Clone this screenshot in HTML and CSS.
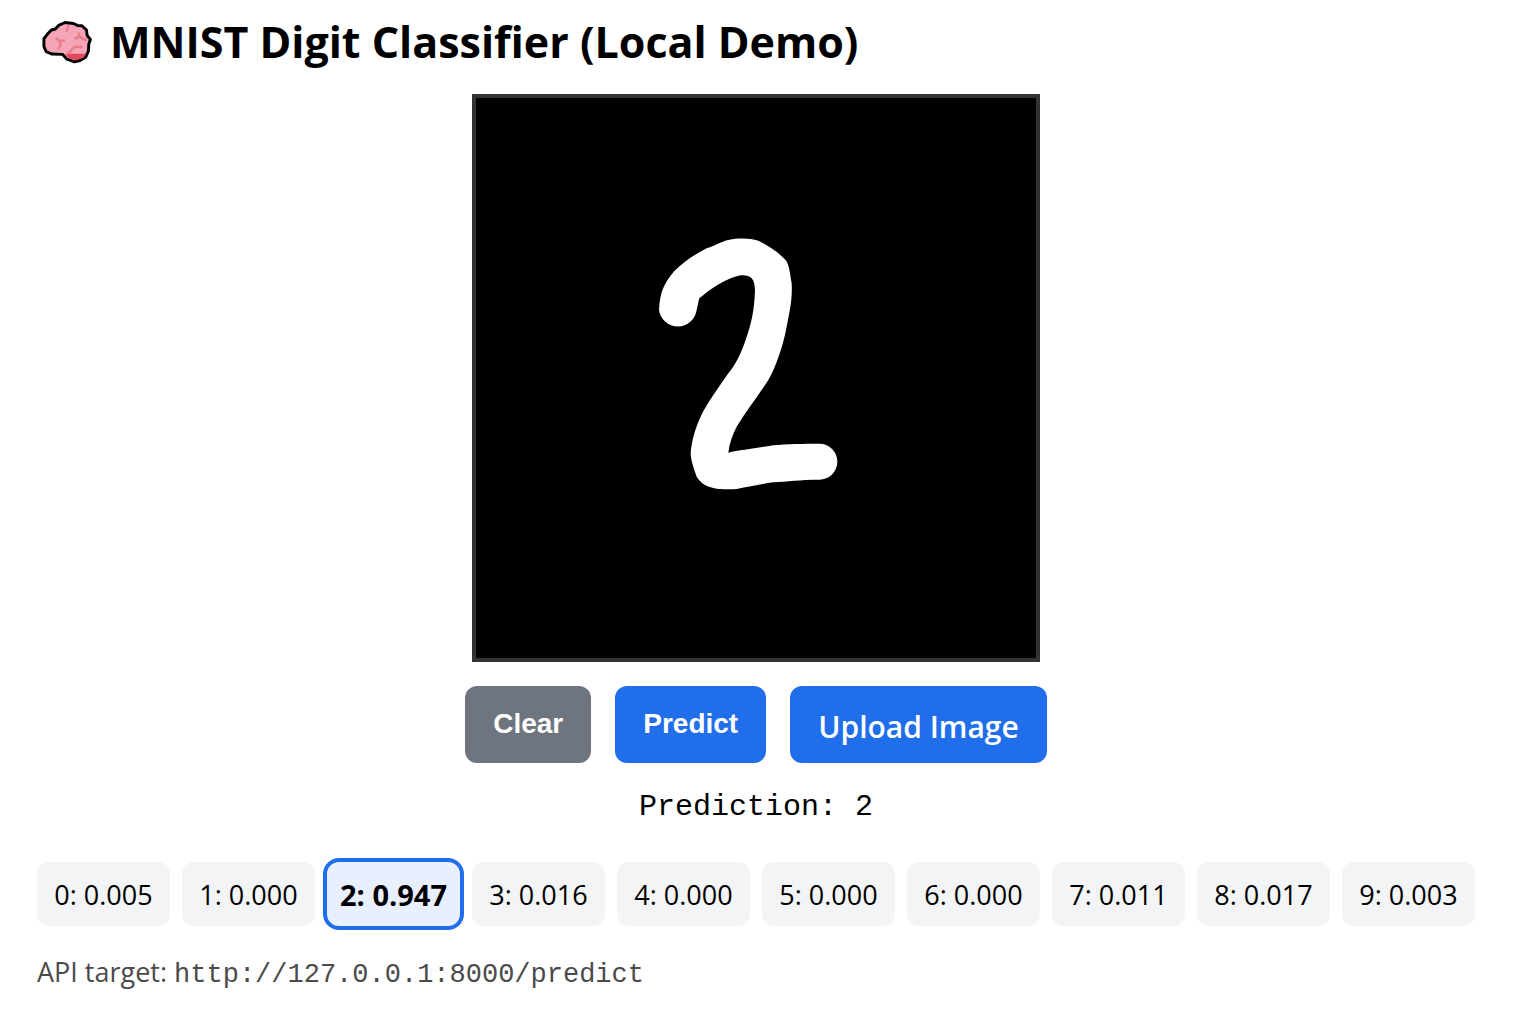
FILE: index.html
```html
<!DOCTYPE html>
<html lang="en">
<head>
<meta charset="utf-8">
<title>MNIST Digit Classifier</title>
<meta name="viewport" content="width=device-width, initial-scale=1">
<link rel="stylesheet" href="styles.css">
</head>
<body>
<main class="page">
  <h1 class="title">
    <svg class="brain" viewBox="0 0 160 132" aria-hidden="true">
      <path d="M18 44 32 29 44 26 54 15 74 6 100 9 112 15 126 16 140 29 142 46 152 58 147 72 146 94 137 113 120 123 103 127 80 119 66 104 34 103 16 96 9 80 9 56Z" fill="#f4a6b8" stroke="#000" stroke-width="9" stroke-linejoin="round"/>
      <path d="M76 102H139L130 115 103 123 83 114Z" fill="#e3485a"/>
      <path d="M45 54 58 63 74 61M58 63 60 76 52 88M85 14 78 34M117 37V50L103 56M117 50 141 61M83 102 103 81H127" fill="none" stroke="#e87f8c" stroke-width="8" stroke-linejoin="round"/>
    </svg>
    <span>MNIST Digit Classifier (Local Demo)</span>
  </h1>

  <svg class="board" viewBox="-492 -366 1680 1680" role="img" aria-label="Handwritten digit">
    <path fill="#fff" d="M57 270C60 215 72 190 103 153C135 122 165 103 200 85C228 76 245 64 265 60C300 53 330 55 355 62C390 80 415 98 437 120C448 137 448 150 455 190C457 235 452 260 440 320C430 375 408 440 385 480C355 527 320 572 290 620C278 643 268 670 265 698C300 690 350 684 400 676C440 672 490 671 538 671A54 54 0 0 1 538 779C480 779 440 785 400 787C365 792 330 799 290 807C265 809 250 807 235 807C200 800 185 793 170 770C158 738 152 715 152 700C155 660 168 615 192 570C215 530 240 497 265 460C285 435 300 408 315 365C335 310 343 270 345 210C344 195 343 185 335 175C325 165 305 162 280 172C250 184 220 200 178 235C174 250 172 262 170 270A57 57 0 0 1 57 270Z"/>
  </svg>

  <div class="actions">
    <button class="btn btn-muted" type="button">Clear</button>
    <button class="btn" type="button">Predict</button>
    <label class="btn btn-upload" for="file">Upload Image<input class="file" id="file" type="file" accept="image/*"></label>
  </div>

  <output class="prediction">Prediction: 2</output>

  <ul class="scores">
    <li class="score">0: 0.005</li>
    <li class="score">1: 0.000</li>
    <li class="score score-top">2: 0.947</li>
    <li class="score">3: 0.016</li>
    <li class="score">4: 0.000</li>
    <li class="score">5: 0.000</li>
    <li class="score">6: 0.000</li>
    <li class="score">7: 0.011</li>
    <li class="score">8: 0.017</li>
    <li class="score">9: 0.003</li>
  </ul>

  <p class="api">API target: <code class="url">http://127.0.0.1:8000/predict</code></p>
</main>
</body>
</html>
```
FILE: styles.css
```css
* {
  box-sizing: border-box;
}

body {
  margin: 0;
  background: #fff;
  color: #000;
  font-family: "Segoe UI", "Open Sans", "Noto Sans", sans-serif;
}

.page {
  display: flex;
  flex-direction: column;
  align-items: center;
  padding: 12px 40px 24px 37px;
}

.title {
  display: flex;
  align-items: center;
  align-self: stretch;
  gap: 17px;
  margin: 0 0 22px;
  padding-left: 4px;
  font-size: 43px;
  line-height: 60px;
}

.brain {
  width: 52px;
  height: 44px;
  flex: none;
}

.board {
  width: 568px;
  max-width: 100%;
  border: 4px solid #333;
  background: #000;
}

.actions {
  display: flex;
  flex-wrap: wrap;
  gap: 24px;
  margin-top: 24px;
}

.btn {
  min-height: 77px;
  padding: 0 28px 2px;
  border: 0;
  border-radius: 12px;
  background: #206eea;
  color: #fff;
  font: bold 28px/32px "Liberation Sans", Arial, sans-serif;
  cursor: pointer;
}

.btn-muted {
  background: #6e757f;
}

.btn-upload {
  position: relative;
  display: flex;
  align-items: center;
  padding-top: 6px;
  font: 600 30px/44px "Segoe UI", "Open Sans", sans-serif;
}

.file {
  position: absolute;
  inset: 0;
  width: 100%;
  height: 100%;
  opacity: 0;
}

.prediction {
  margin-top: 24px;
  font: 30px/40px "Liberation Mono", monospace;
}

.scores {
  display: grid;
  grid-template-columns: repeat(10, 1fr);
  align-self: stretch;
  gap: 12px;
  margin: 35px 0 0;
  padding: 0;
  list-style: none;
}

.score {
  padding: 13px 0 11px;
  border-radius: 12px;
  background: #f3f4f6;
  font-size: 27px;
  line-height: 40px;
  text-align: center;
  white-space: nowrap;
}

.score-top {
  outline: 4px solid #206eea;
  background: #e8efff;
  font-size: 29px;
  font-weight: bold;
}

.api {
  align-self: stretch;
  margin: 26px 0 0;
  color: #4b4b4b;
  font-size: 27px;
  line-height: 40px;
}

.url {
  font: 27px/40px "Liberation Mono", monospace;
}
```
